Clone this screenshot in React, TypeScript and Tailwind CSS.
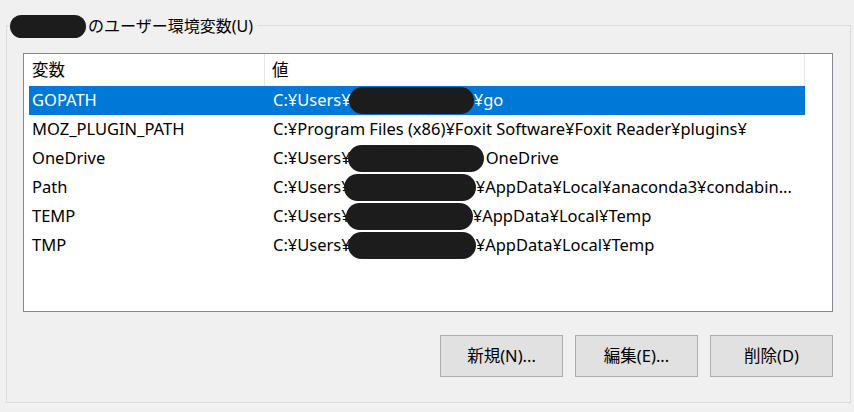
import React from "react";

const Blob = ({ w, h = 26, ml = 0, className = "" }: { w: number; h?: number; ml?: number; className?: string }) => (
  <span
    className={`inline-block align-middle rounded-[14px] bg-[#1c1c1c] ${className}`}
    style={{ width: w, height: h, marginLeft: ml }}
  />
);

type Row = { name: string; pre: string; blob?: number; bml?: number; post: string; ml?: number };

const rows: Row[] = [
  { name: "GOPATH", pre: "C:¥Users¥", blob: 125, bml: -2, post: "¥go", ml: 0 },
  { name: "MOZ_PLUGIN_PATH", pre: "C:¥Program Files (x86)¥Foxit Software¥Foxit Reader¥plugins¥", post: "" },
  { name: "OneDrive", pre: "C:¥Users¥", blob: 136, bml: -3, post: "OneDrive", ml: 2 },
  { name: "Path", pre: "C:¥Users¥", blob: 132, bml: -7, post: "¥AppData¥Local¥anaconda3¥condabin...", ml: 0 },
  { name: "TEMP", pre: "C:¥Users¥", blob: 127, bml: -5, post: "¥AppData¥Local¥Temp", ml: 0 },
  { name: "TMP", pre: "C:¥Users¥", blob: 128, bml: -3, post: "¥AppData¥Local¥Temp", ml: 0 },
];

export default function App() {
  return (
    <div
      className="w-[854px] h-[412px] bg-[#f0f0f0] overflow-hidden text-[16.5px] text-black"
      style={{ fontFamily: '"Noto Sans", "Noto Sans CJK JP", sans-serif' }}
    >
      <div className="pt-[25px] pl-[6px]">
        <div className="relative w-[845px] h-[378px] border border-[#dcdcdc] pl-[16px] pt-[27px]">
          <div className="absolute left-[3px] top-[-13px] flex items-center bg-[#f0f0f0] pr-[4px] h-[26px]">
            <Blob w={76} h={23} className="mr-[2px]" />
            <span className="text-[16px] leading-none">のユーザー環境変数(U)</span>
          </div>

          <div className="w-[810px] h-[259px] border border-[#828790] bg-white pl-[5px]">
            <div className="flex h-[32px] w-[776px]">
              <div className="w-[236px] border-r border-[#e5e5e5] flex items-center pl-[3px]">変数</div>
              <div className="flex-1 border-r border-[#e5e5e5] flex items-center pl-[7px]">値</div>
            </div>
            {rows.map((r, i) => (
              <div
                key={r.name}
                className={`flex h-[29px] w-[776px] items-center whitespace-nowrap ${
                  i === 0 ? "bg-[#0078d7] text-white" : ""
                }`}
              >
                <div className="w-[237px] pl-[3px]">{r.name}</div>
                <div className="flex-1 pl-[7px] flex items-center overflow-hidden">
                  <span>{r.pre}</span>
                  {r.blob ? <Blob w={r.blob} h={27} ml={r.bml ?? 0} /> : null}
                  <span style={{ marginLeft: r.ml ?? 0 }}>{r.post}</span>
                </div>
              </div>
            ))}
          </div>

          <div className="flex justify-end gap-[12px] mt-[23px] w-[810px]">
            {["新規(N)...", "編集(E)...", "削除(D)"].map((t) => (
              <button
                key={t}
                className="w-[123px] h-[42px] bg-[#e1e1e1] border border-[#adadad] text-[16.5px] text-black flex items-center justify-center"
              >
                {t}
              </button>
            ))}
          </div>
        </div>
      </div>
    </div>
  );
}
